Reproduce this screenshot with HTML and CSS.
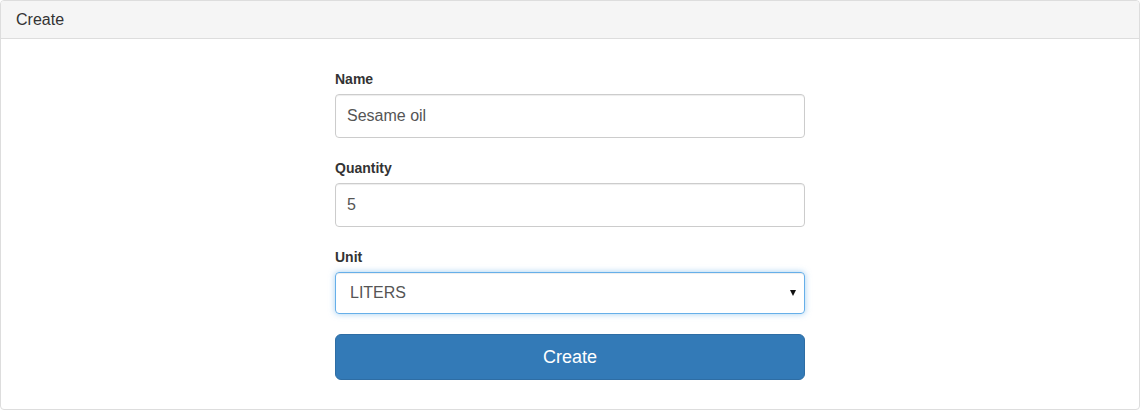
FILE: index.html
```html
<!DOCTYPE html>
<html>
<head>
<meta charset="utf-8">
<link rel="stylesheet" href="styles.css">
</head>
<body>
<div class="panel">
  <div class="panel-heading">Create</div>
  <div class="panel-body">
    <form class="form">
      <div class="group">
        <label class="label">Name</label>
        <div class="control">Sesame oil</div>
      </div>
      <div class="group">
        <label class="label">Quantity</label>
        <div class="control">5</div>
      </div>
      <div class="group">
        <label class="label">Unit</label>
        <div class="control select">LITERS<span class="caret"></span></div>
      </div>
      <div class="btn">Create</div>
    </form>
  </div>
</div>
</body>
</html>
```
FILE: styles.css
```css
* { box-sizing: border-box; }
html, body { margin: 0; padding: 0; background: #fff; }
body { font-family: "Liberation Sans", Arial, sans-serif; color: #333; width: 1140px; height: 411px; }
.panel { width: 1140px; height: 410px; border: 1px solid #ddd; border-radius: 4px; background: #fff; overflow: hidden; }
.panel-heading { height: 38px; background: #f5f5f5; border-bottom: 1px solid #ddd; padding: 0 15px; font-size: 16px; line-height: 37px; color: #333; }
.panel-body { padding: 30px 0 29px; display: flex; justify-content: center; }
.form { width: 470px; display: flex; flex-direction: column; }
.group { display: flex; flex-direction: column; margin-bottom: 20px; }
.label { font-size: 14px; font-weight: bold; line-height: 20px; margin-bottom: 5px; color: #333; }
.control { height: 44px; border: 1px solid #ccc; border-radius: 4px; padding: 0 11px; font-size: 16px; line-height: 42px; color: #555; box-shadow: inset 0 1px 1px rgba(0,0,0,.075); }
.select { position: relative; border-color: #66afe9; padding-left: 14px; height: 42px; line-height: 40px; box-shadow: inset 0 1px 1px rgba(0,0,0,.075), 0 0 6px rgba(102,175,233,.6); }
.caret { position: absolute; right: 8px; top: 17px; width: 0; height: 0; border-left: 3.5px solid transparent; border-right: 3.5px solid transparent; border-top: 6px solid #111; }
.btn { height: 46px; background: #337ab7; border: 1px solid #2e6da4; border-radius: 6px; color: #fff; font-size: 18px; line-height: 44px; text-align: center; }
```
